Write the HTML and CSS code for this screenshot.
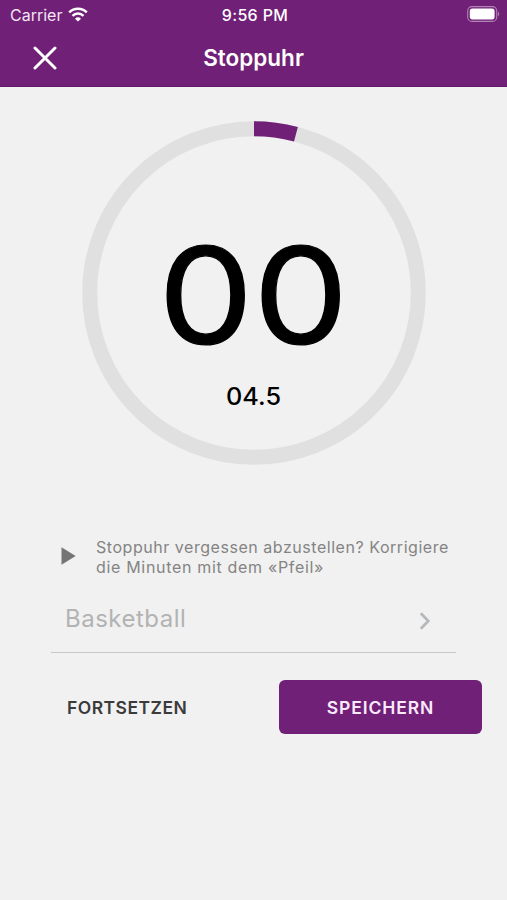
FILE: index.html
```html
<!DOCTYPE html>
<html lang="de">
<head>
<meta charset="utf-8">
<meta name="viewport" content="width=device-width, initial-scale=1">
<title>Stoppuhr</title>
<link rel="stylesheet" href="styles.css">
</head>
<body>
<header class="header">
  <div class="status">
    <div class="carrier">
      <span class="carrier-name">Carrier</span>
      <svg class="wifi" viewBox="0 0 20 15" width="20" height="15" fill="none" stroke="#fff" stroke-width="2.5">
        <path d="M1.2 5.3a12.7 12.7 0 0 1 17.6 0"/>
        <path d="M4.5 8.8a8 8 0 0 1 11 0"/>
        <path d="M10 14.6 7 11.7a4.3 4.3 0 0 1 6 0Z" fill="#fff" stroke="none"/>
      </svg>
    </div>
    <time class="clock"><span>9:56 PM</span></time>
    <svg class="battery" viewBox="0 0 33 16" width="33" height="16">
      <rect x=".7" y=".6" width="29" height="14.8" rx="4.2" fill="none" stroke="#b184b3" stroke-width="1.1"/>
      <rect x="2.8" y="2.6" width="24.8" height="10.8" rx="2.6" fill="#fff"/>
      <path d="M31 5.5q2.4 2.5 0 5Z" fill="#b184b3"/>
    </svg>
  </div>
  <div class="nav">
    <button class="close" aria-label="Schliessen">
      <svg viewBox="0 0 24 24" width="24" height="24" stroke="#fff" stroke-width="3" stroke-linecap="round"><path d="m2 2 20 20M22 2 2 22"/></svg>
    </button>
    <h1 class="title"><span>Stoppuhr</span></h1>
  </div>
</header>
<main class="main">
  <svg class="dial" viewBox="0 0 344 344" width="344" height="344">
    <circle cx="172" cy="172" r="164.3" fill="none" stroke="#e0e0e0" stroke-width="15"/>
    <circle cx="172" cy="172" r="164.3" fill="none" stroke="#702076" stroke-width="15" pathLength="360" stroke-dasharray="14.8 345.2" transform="rotate(-90 172 172)"/>
    <text class="minutes" x="76.3" y="222.5" textLength="190" lengthAdjust="spacingAndGlyphs">00</text>
    <text class="seconds" x="144" y="283.5" textLength="55" lengthAdjust="spacingAndGlyphs">04.5</text>
  </svg>
  <div class="hint">
    <svg class="play" viewBox="0 0 15 18" width="15" height="18"><path d="M.5.2 14.7 9 .5 17.8Z" fill="#757575"/></svg>
    <p class="hint-text"><span class="line first">Stoppuhr vergessen abzustellen? Korrigiere</span><br><span class="line second">die Minuten mit dem «Pfeil»</span></p>
  </div>
  <div class="picker">
    <span class="sport">Basketball</span>
    <svg class="chevron" viewBox="0 0 12 18" width="12" height="18" fill="none" stroke="#b5b9bb" stroke-width="2.7"><path d="m1.8 1.3 7.5 7.7-7.5 7.7"/></svg>
  </div>
  <div class="actions">
    <button class="resume"><span>FORTSETZEN</span></button>
    <button class="save"><span>SPEICHERN</span></button>
  </div>
</main>
</body>
</html>
```
FILE: styles.css
```css
* { box-sizing: border-box; }
body {
  margin: 0;
  min-height: 900px;
  background: #f1f1f1;
  font-family: Inter, "Liberation Sans", sans-serif;
}
button { border: 0; padding: 0; background: none; font: inherit; display: flex; align-items: center; }
svg { display: block; flex: none; }
.header { height: 87px; background: #702076; color: #fff; border-bottom: 1px solid #641a6b; }
.status { display: grid; grid-template-columns: 1fr auto 1fr; align-items: center; height: 29px; padding: 0 7px 0 10px; }
.carrier { display: flex; align-items: center; gap: 6px; font-size: 16px; color: #f3e5f4; }
.clock { font-size: 16px; font-weight: 500; letter-spacing: .35px; }
.battery { justify-self: end; margin-bottom: 1px; }
.nav { display: grid; grid-template-columns: 1fr auto 1fr; align-items: center; height: 58px; padding: 0 33px; }
.title { margin: 0; font-size: 22.5px; line-height: 28px; font-weight: 600; }
.main { display: flex; flex-direction: column; padding: 34px 25px 0; }
.dial { align-self: center; }
.minutes { font-size: 134px; font-weight: 400; stroke: #000; stroke-width: 1.2px; }
.seconds { font-size: 24px; font-weight: 500; }
.hint { display: flex; align-items: center; gap: 20px; margin: 73px 0 0 36px; }
.play { margin-bottom: 3px; }
.hint-text { margin: 0; font-size: 16px; line-height: 19.5px; color: #848484; white-space: nowrap; }
.first { letter-spacing: .54px; }
.second { letter-spacing: .68px; }
.picker { display: flex; align-items: center; justify-content: space-between; height: 76px; margin: 0 26px; padding: 7px 25px 0 14px; border-bottom: 1.5px solid #c7c7c7; }
.sport { font-size: 24px; letter-spacing: .5px; color: #b3b3b3; }
.chevron { margin-top: 5px; }
.actions { display: flex; justify-content: space-between; margin-top: 27px; }
.resume, .save { height: 54px; font-size: 17.5px; font-weight: 600; }
.resume { padding-left: 42px; color: #3b3b3b; letter-spacing: .47px; }
.save { width: 203px; justify-content: center; border-radius: 6px; background: #702076; color: #fce9fc; letter-spacing: .9px; }
```
